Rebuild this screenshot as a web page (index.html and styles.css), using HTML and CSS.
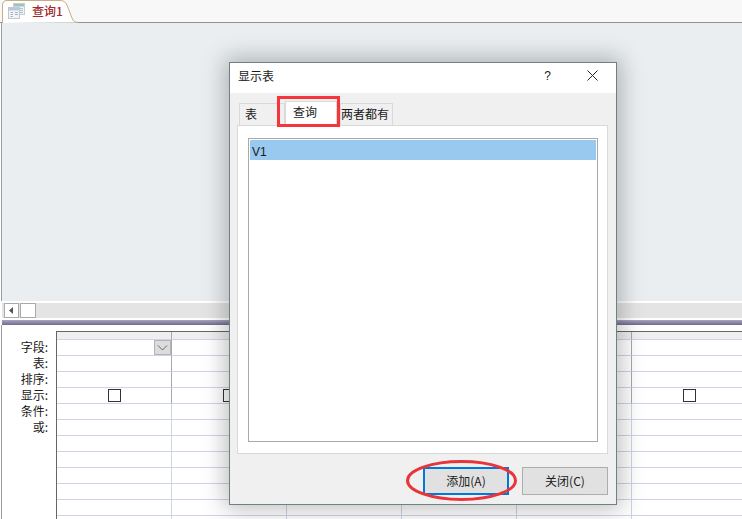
FILE: index.html
```html
<!DOCTYPE html>
<html lang="zh">
<head>
<meta charset="utf-8">
<title>查询1</title>
<link rel="stylesheet" href="styles.css">
</head>
<body>
<div class="app">
  <div class="tabbar">
    <div class="doc-tab">
      <svg class="doc-tab-shape" width="80" height="23" viewBox="0 0 80 23"><path d="M2.500 23V5Q2.500 .5 7 .5H60Q65 .5 67 5L72 18Q73.500 22.500 78 22.500" fill="#fff" stroke="#c9ab85"/></svg>
      <svg class="doc-icon" width="17" height="16" viewBox="0 0 17 16"><rect x="5.500" y=".5" width="11" height="11" fill="#eef3f3" stroke="#c3d0d2"/><rect x="6" y="1" width="10" height="2.500" fill="#9cc4bf"/><path d="M12 5.500h3M12 7.500h3M12 9.500h3" stroke="#b3c2c4"/><rect x=".5" y="4.500" width="11" height="11" fill="#f2f4f8" stroke="#c0c6d4"/><rect x="1" y="5" width="10" height="2.500" fill="#bcc6da"/><path d="M2.500 9.500h2.500M2.500 11.500h2.500M2.500 13.500h2.500M7 9.500h3M7 11.500h3" stroke="#aab2c4"/></svg>
      <span class="doc-title">查询1</span>
    </div>
  </div>
  <div class="design-pane"></div>
  <div class="hscroll">
    <div class="hscroll-btn"><svg width="5" height="7" viewBox="0 0 5 7"><path d="M4 0V7L0 3.500Z" fill="#555"/></svg></div>
    <div class="hscroll-thumb"></div>
  </div>
  <div class="splitter"></div>
  <div class="qbe">
    <div class="qbe-labels">
      <div>字段:</div><div>表:</div><div>排序:</div><div>显示:</div><div>条件:</div><div>或:</div>
    </div>
    <div class="qbe-grid">
      <div class="hd"></div><div class="hd"></div><div class="hd"></div><div class="hd"></div><div class="hd"></div><div class="hd last"></div>
      <div class="c top drop"><span class="combo"><svg width="11" height="6" viewBox="0 0 11 6"><path d="M1 .5L5.500 5L10 .5" fill="none" stroke="#666"/></svg></span></div><div class="c top"></div><div class="c top"></div><div class="c top"></div><div class="c top"></div><div class="c last"></div>
      <div class="c top"></div><div class="c top"></div><div class="c top"></div><div class="c top"></div><div class="c top"></div><div class="c last"></div>
      <div class="c top"></div><div class="c top"></div><div class="c top"></div><div class="c top"></div><div class="c top"></div><div class="c last"></div>
      <div class="c top chk"><i></i></div><div class="c top chk"><i></i></div><div class="c top chk"><i></i></div><div class="c top chk"><i></i></div><div class="c top chk"><i></i></div><div class="c last chk"><i></i></div>
      <div class="c"></div><div class="c"></div><div class="c"></div><div class="c"></div><div class="c"></div><div class="c last"></div>
      <div class="c"></div><div class="c"></div><div class="c"></div><div class="c"></div><div class="c"></div><div class="c last"></div>
      <div class="c"></div><div class="c"></div><div class="c"></div><div class="c"></div><div class="c"></div><div class="c last"></div>
      <div class="c"></div><div class="c"></div><div class="c"></div><div class="c"></div><div class="c"></div><div class="c last"></div>
      <div class="c"></div><div class="c"></div><div class="c"></div><div class="c"></div><div class="c"></div><div class="c last"></div>
      <div class="c"></div><div class="c"></div><div class="c"></div><div class="c"></div><div class="c"></div><div class="c last"></div>
      <div class="c"></div><div class="c"></div><div class="c"></div><div class="c"></div><div class="c"></div><div class="c last"></div>
      <div class="c"></div><div class="c"></div><div class="c"></div><div class="c"></div><div class="c"></div><div class="c last"></div>
    </div>
  </div>

  <div class="dialog">
    <div class="dlg-title">
      <span class="dlg-name">显示表</span>
      <span class="dlg-help">?</span>
      <svg class="dlg-close" width="11" height="11" viewBox="0 0 11 11"><path d="M.5 .5L10.500 10.500M10.500 .5L.5 10.500" stroke="#222" fill="none"/></svg>
    </div>
    <div class="dlg-body">
      <div class="tabs">
        <div class="tab t1">表</div>
        <div class="tab t2 active">查询</div>
        <div class="tab t3">两者都有</div>
      </div>
      <div class="tab-pane">
        <div class="list"><div class="list-item">V1</div></div>
      </div>
      <div class="actions">
        <button class="btn primary">添加(A)</button>
        <button class="btn">关闭(C)</button>
      </div>
    </div>
  </div>

  <div class="mark-rect"></div>
  <svg class="mark-ellipse" width="113" height="43" viewBox="0 0 113 43"><ellipse cx="56.500" cy="21.500" rx="54" ry="19" fill="none" stroke="#e9343a" stroke-width="3"/></svg>
</div>
</body>
</html>
```
FILE: styles.css
```css
* { box-sizing: border-box; }
html, body { margin: 0; padding: 0; }
body {
  width: 742px;
  height: 519px;
  overflow: hidden;
  background: #fff;
  font-family: "Noto Sans CJK SC", "Liberation Sans", sans-serif;
  font-size: 12px;
  color: #1a1a1a;
}
.app {
  position: relative;
  width: 742px;
  height: 519px;
  overflow: hidden;
  display: flex;
  flex-direction: column;
}
.tabbar {
  height: 23px;
  flex: none;
  background: #f8f8f8;
  border-bottom: 1px solid #8f9396;
}
.doc-tab {
  position: relative;
  height: 23px;
  width: 80px;
  display: flex;
  align-items: center;
  padding: 0 0 2px 8px;
}
.doc-tab-shape { position: absolute; left: 0; top: 0; }
.doc-icon { position: relative; margin-right: 7px; }
.doc-title {
  position: relative;
  font-size: 12px;
  font-weight: 500;
  color: #a32a2e;
  line-height: 16px;
}
.design-pane {
  height: 278px;
  flex: none;
  margin-left: 1px;
  background: #eaeef1;
  border-left: 1px solid #9a9ea2;
}
.hscroll {
  height: 19px;
  flex: none;
  margin-left: 2px;
  padding-left: 2px;
  display: flex;
  background: #e4e4e4;
  border-top: 2px solid #fff;
  border-bottom: 2px solid #fff;
  gap: 1px;
  align-items: stretch;
}
.hscroll-btn, .hscroll-thumb {
  background: #fff;
  border: 1px solid #aaa;
}
.hscroll-btn { width: 15px; display: flex; align-items: center; justify-content: center; }
.hscroll-thumb { width: 16px; }
.splitter {
  height: 5px;
  flex: none;
  margin-left: 2px;
  background: linear-gradient(#a9a6c0, #6f6b8c);
}
.qbe {
  flex: 1;
  display: flex;
  margin-left: 1px;
  border-left: 1px solid #9a9ea2;
  padding-top: 6px;
  min-height: 0;
}
.qbe-labels {
  width: 54px;
  flex: none;
  padding: 8px 8px 0 0;
  text-align: right;
  font-size: 12px;
  line-height: 16px;
  color: #1a1a1a;
}
.qbe-grid {
  flex: 1;
  display: grid;
  grid-template-columns: repeat(5, 115px) 1fr;
  grid-template-rows: 8px;
  grid-auto-rows: 16px;
  border-left: 1px solid #666;
  border-top: 1px solid #666;
  align-content: start;
}
.qbe-grid .hd {
  height: 8px;
  background: #efefef;
  border-bottom: 1px solid #ccd4e6;
  border-right: 1px solid #a8a8a8;
}
.hd.last { border-right: 0; }
.c {
  border-bottom: 1px solid #ccd4e6;
  border-right: 1px solid #ccd4e6;
  position: relative;
}
.c.top { border-right-color: #a8a8a8; }
.c.last { border-right: 0; }
.combo {
  position: absolute;
  right: 0;
  top: 0;
  width: 17px;
  height: 15px;
  background: #dcdcdc;
  border: 1px solid #b4b4b4;
  display: flex;
  align-items: center;
  justify-content: center;
}
.chk { display: flex; justify-content: center; padding-top: 1px; }
.c.last.chk { padding-left: 5px; }
.chk i {
  display: block;
  width: 13px;
  height: 13px;
  background: #fff;
  border: 1px solid #333;
}
.dialog {
  position: absolute;
  left: 229px;
  top: 62px;
  width: 388px;
  height: 443px;
  background: #f0f0f0;
  border: 1px solid #6f8083;
  box-shadow: 0 0 22px 4px rgba(0, 0, 0, .26);
  display: flex;
  flex-direction: column;
}
.dlg-title {
  height: 30px;
  flex: none;
  background: #fff;
  display: flex;
  align-items: center;
  padding: 0 18px 5px 8px;
}
.dlg-name { flex: 1; font-size: 12px; }
.dlg-help { margin-right: 36px; font-size: 12px; font-family: "Liberation Sans", sans-serif; }
.dlg-close { flex: none; }
.dlg-body {
  flex: 1;
  padding: 8px 8px 0 7px;
  display: flex;
  flex-direction: column;
}
.tabs {
  height: 24px;
  flex: none;
  display: flex;
  align-items: flex-end;
  padding-left: 2px;
  position: relative;
  z-index: 1;
}
.tab {
  height: 22px;
  border: 1px solid #d9d9d9;
  border-bottom: 0;
  background: #f0f0f0;
  display: flex;
  align-items: center;
  justify-content: center;
  font-size: 12px;
  line-height: 16px;
  padding-bottom: 2px;
  white-space: nowrap;
}
.t1 { width: 46px; padding-right: 22px; }
.t2 { width: 52px; height: 25px; background: #fff; margin-bottom: -1px; padding: 0 12px 5px 0; }
.t3 { width: 53px; margin-left: 3px; justify-content: flex-start; }
.tab-pane {
  height: 329px;
  flex: none;
  background: #fff;
  border: 1px solid #d9d9d9;
  padding: 12px 9px 11px 10px;
}
.list {
  height: 100%;
  border: 1px solid #a9a9a9;
  padding: 1px;
}
.list-item {
  height: 20px;
  background: #99c9ef;
  padding-left: 2px;
  line-height: 24px;
  font-size: 12px;
  font-family: "Liberation Sans", sans-serif;
}
.actions {
  display: flex;
  justify-content: flex-end;
  gap: 13px;
  padding-top: 13px;
}
.btn {
  width: 86px;
  height: 28px;
  padding: 0 0 2px;
  background: #e1e1e1;
  border: 1px solid #adadad;
  font: inherit;
  font-size: 12px;
  color: #1a1a1a;
}
.btn.primary { border: 2px solid #0078d7; }
.mark-rect {
  position: absolute;
  z-index: 2;
  left: 277px;
  top: 96px;
  width: 63px;
  height: 31px;
  border: 3px solid #f6343c;
}
.mark-ellipse { position: absolute; z-index: 2; left: 405px; top: 459px; }
```
